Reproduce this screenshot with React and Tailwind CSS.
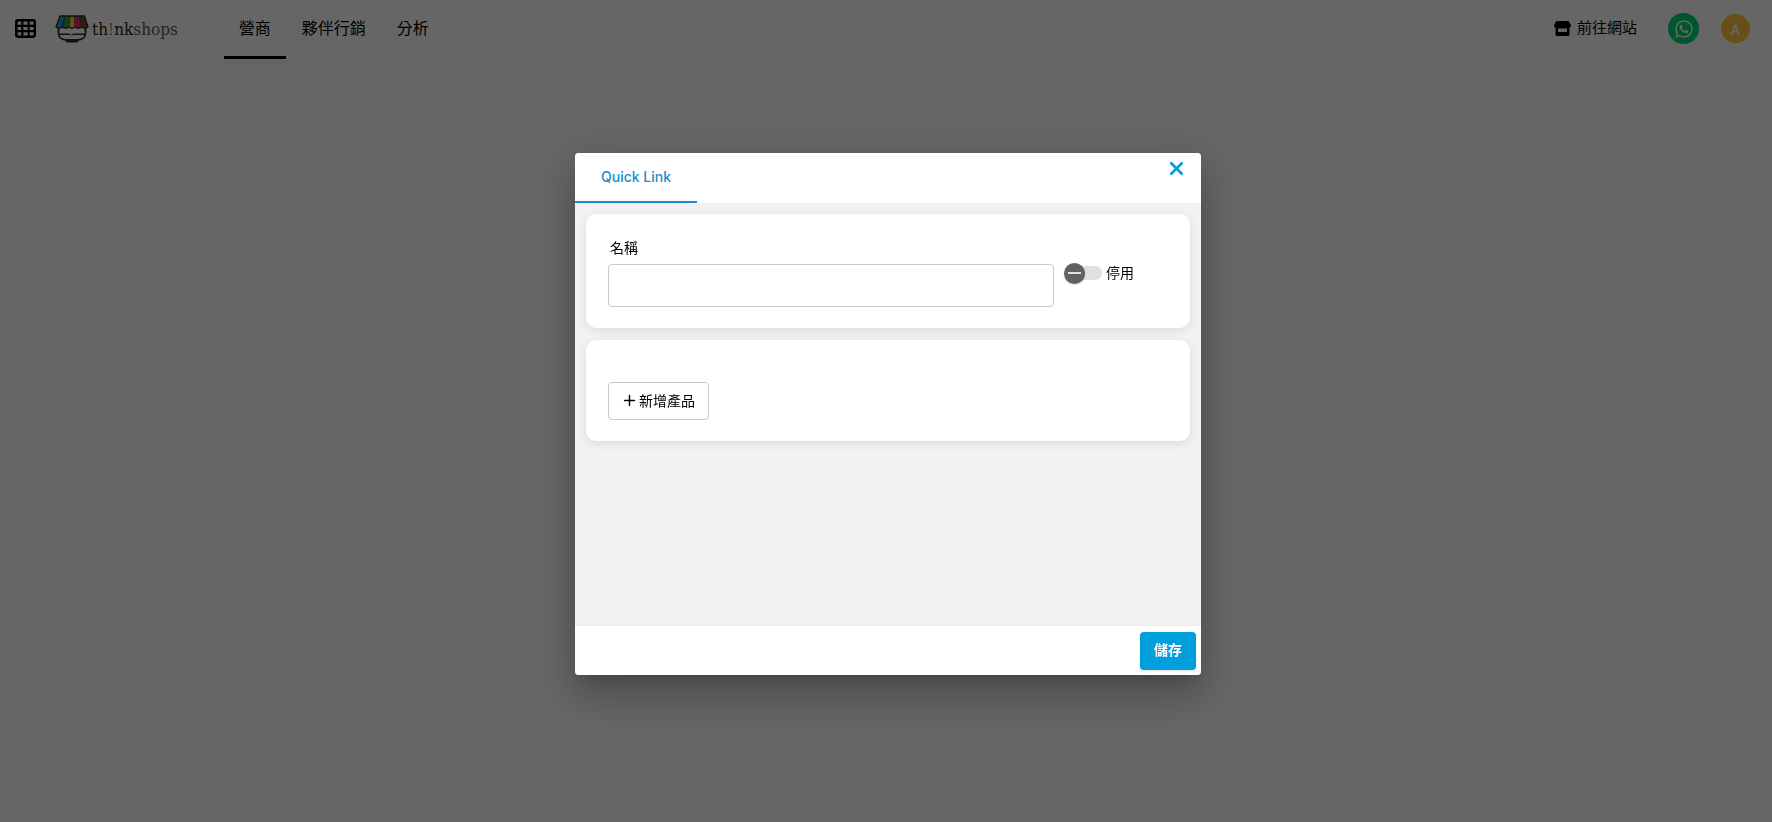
import React, { useState } from "react";
import { FaWhatsapp } from "react-icons/fa";
import { Plus, X } from "lucide-react";

const GridIcon = () => (
    <svg className="h-[19px] w-[21px]" viewBox="0 0 20 18" aria-hidden="true">
        <path
            fillRule="evenodd"
            d="M3 0h14a3 3 0 0 1 3 3v12a3 3 0 0 1-3 3H3a3 3 0 0 1-3-3V3a3 3 0 0 1 3-3zM2.500 3v2.500H6V2.300H3.200zM8 2.300v3.200h4V2.300zM14 2.300v3.200h3.700V3l-.7-.7zM2.500 7.500v3H6v-3zM8 7.500v3h4v-3zM14 7.500v3h3.700v-3zM2.500 12.500V15l.7.7H6v-3.200zM8 12.500v3.200h4v-3.200zM14 12.500v3.200h3l.7-.7v-2.500z"
        />
    </svg>
);

const StoreIcon = () => (
    <svg className="h-[15px] w-[17px]" viewBox="0 0 17 15" aria-hidden="true">
        <path d="M3 0h11a1 1 0 0 1 .9.5L16.900 4c.4 1.500-.6 2.500-1.900 2.500H2C.7 6.500-.3 5.500.1 4L2.100.5A1 1 0 0 1 3 0z" />
        <path fillRule="evenodd" d="M1.500 6h14v7.500A1.500 1.500 0 0 1 14 15H3a1.500 1.500 0 0 1-1.500-1.500zM4 7.500V11h9V7.500z" />
    </svg>
);

const LogoIcon = () => (
    <svg className="h-7 w-[34px]" viewBox="0 0 34 28" aria-hidden="true">
        <path
            d="M3.500 13v5c0 4.500 3.500 6.800 7.500 6.800h12c4 0 7.500-2.300 7.500-6.800v-5"
            fill="#fff"
            stroke="#2b2b2b"
            strokeWidth="1.800"
        />
        <path d="M3.500 19.300H15M18 19.300h12.500M17 19.300v1.500" stroke="#2b2b2b" strokeWidth="1.500" />
        <path d="M10 24.500h14l-1.500 3h-11z" fill="#2b2b2b" />
        <path d="M5 1h5.500L7.300 12q-3 2.500-6.300 0z" fill="#1ba0d7" />
        <path d="M10 1h5l-1.300 11q-3 2.500-6.400 0z" fill="#26a04b" />
        <path d="M14.800 1h4.500l1 11q-3.300 2.500-6.600 0z" fill="#f7c331" />
        <path d="M19.300 1h5l2.400 11q-3 2.500-6.400 0z" fill="#e8297b" />
        <path d="M24.200 1h5.300L33 12q-3 2.500-6.300 0z" fill="#75492a" />
        <path
            d="M5 1h24.500L33 12q-3.200 2.600-6.300 0-3.200 2.600-6.400 0-3.300 2.600-6.600 0-3.200 2.600-6.400 0-3.200 2.600-6.300 0z"
            fill="none"
            stroke="#2b2b2b"
            strokeWidth="1.300"
            strokeLinejoin="round"
        />
        <path d="M10 1 7.300 12M14.800 1l-1.100 11M19.300 1l1 11M24.200 1l2.500 11" stroke="#2b2b2b" strokeWidth=".8" />
    </svg>
);

const navItems = [
    { label: "營商", active: true },
    { label: "夥伴行銷", active: false },
    { label: "分析", active: false },
];

const TopBar = () => (
    <header className="flex h-[59px] items-center bg-white pb-[2px] pl-[15px] pr-[22px] shadow-[0_4px_12px_rgba(0,0,0,0.03)]">
        <button type="button" aria-label="Menu">
            <GridIcon />
        </button>
        <a href="#" className="ml-[19px] flex items-center gap-[3px]">
            <LogoIcon />
            <span className="font-['DejaVu_Serif_Condensed','DejaVu_Serif',serif] text-[17px] leading-6 text-[#222]">
                th<span className="text-[#f26a2e]">!</span>nk<span className="text-[#5a5a5a]">shops</span>
            </span>
        </a>
        <nav className="-mb-[2px] ml-[46px] flex gap-px self-stretch">
            {navItems.map((item) => (
                <a
                    key={item.label}
                    href="#"
                    className={
                        item.active
                            ? "flex items-center border-b-3 border-black px-[15px] pt-[2px] text-base"
                            : "flex items-center border-b-3 border-transparent px-[15px] pt-[2px] text-base"
                    }
                >
                    {item.label}
                </a>
            ))}
        </nav>
        <div className="ml-auto flex items-center">
            <a href="#" className="flex items-center gap-[6px] text-[15px]">
                <StoreIcon />
                前往網站
            </a>
            <a
                href="#"
                aria-label="WhatsApp"
                className="ml-[31px] flex size-[31px] items-center justify-center rounded-full bg-[#00d670] text-white"
            >
                <FaWhatsapp className="size-5" />
            </a>
            <button
                type="button"
                className="ml-[22px] flex size-[29px] items-center justify-center rounded-full bg-[#ffc83d] pt-[2px] font-['Roboto',sans-serif] text-sm font-medium text-white"
            >
                A
            </button>
        </div>
    </header>
);

const QuickLinkDialog = () => {
    const [name, setName] = useState("");
    const [enabled, setEnabled] = useState(false);

    return (
        <div
            role="dialog"
            aria-label="Quick Link"
            className="flex h-[522px] w-full max-w-[626px] flex-col overflow-hidden rounded bg-[#f2f2f2] shadow-[0_11px_15px_-7px_rgba(0,0,0,0.2),0_24px_38px_3px_rgba(0,0,0,0.14),0_9px_46px_8px_rgba(0,0,0,0.12)]"
        >
            <div className="flex h-[50px] items-start justify-between bg-white pr-[14px]">
                <button
                    type="button"
                    className="h-full w-[122px] border-b-2 border-[#1a8ccf] font-['Inter',sans-serif] text-sm font-medium text-[#1a8ccf]"
                >
                    Quick Link
                </button>
                <button type="button" aria-label="Close" className="mt-[5px] text-[#009fdb]">
                    <X className="size-[21px]" strokeWidth={3} />
                </button>
            </div>

            <div className="flex flex-1 flex-col gap-3 px-[11px] py-[11px]">
                {/* Name and status */}
                <div className="flex items-start gap-[10px] rounded-[10px] bg-white px-[22px] pb-[21px] pt-6 shadow-[0_2px_10px_rgba(0,0,0,0.1)]">
                    <div className="flex w-[446px] flex-col">
                        <label htmlFor="link-name" className="mb-[6px] pl-[2px] text-sm leading-5">
                            名稱
                        </label>
                        <input
                            id="link-name"
                            type="text"
                            value={name}
                            onChange={(e) => setName(e.target.value)}
                            className="h-[43px] w-full rounded border border-[#c8c8c8] px-3 text-sm"
                        />
                    </div>
                    <label className="mt-[23px] flex items-center gap-1 text-sm leading-6">
                        <input
                            type="checkbox"
                            checked={enabled}
                            onChange={(e) => setEnabled(e.target.checked)}
                            className="relative h-[14px] w-[38px] appearance-none rounded-full bg-[#e0e0e0] before:absolute before:-top-[3px] before:left-0 before:size-[21px] before:rounded-full before:bg-[#616161] before:shadow after:absolute after:left-1 after:top-[6px] after:h-[2px] after:w-[13px] after:bg-[#e0e0e0] checked:before:left-[17px] checked:after:left-[21px]"
                        />
                        停用
                    </label>
                </div>

                {/* Products */}
                <div className="rounded-[10px] bg-white px-[22px] pb-[21px] pt-[42px] shadow-[0_2px_10px_rgba(0,0,0,0.1)]">
                    <button
                        type="button"
                        className="flex h-[38px] items-center gap-px rounded border border-[#c8c8c8] pb-px pl-3 pr-[13px] text-sm"
                    >
                        <Plus className="size-[17px]" strokeWidth={2} />
                        新增產品
                    </button>
                </div>
            </div>

            <div className="flex h-[50px] items-center justify-end border-t border-[#ebebeb] bg-white px-[5px]">
                <button
                    type="button"
                    className="h-[38px] rounded bg-[#009fdb] px-[14px] pb-px text-sm font-bold text-white shadow-sm"
                >
                    儲存
                </button>
            </div>
        </div>
    );
};

const App = () => {
    return (
        <div className="min-h-screen bg-white font-['Liberation_Sans','Noto_Sans_CJK_TC',sans-serif] text-black">
            <TopBar />
            <div className="fixed inset-0 flex items-center justify-center bg-black/60 pl-1 pt-[6px]">
                <QuickLinkDialog />
            </div>
        </div>
    );
};

export default App;
